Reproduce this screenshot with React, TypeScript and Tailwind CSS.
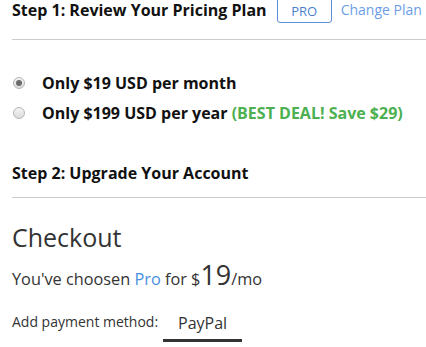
import React, { useState } from 'react';

function Radio({ checked, onClick }: { checked: boolean; onClick: () => void }) {
  return (
    <span
      onClick={onClick}
      className="ml-px w-[12px] h-[12px] rounded-full border border-[#b5b5b5] bg-gradient-to-b from-[#f4f4f4] to-[#dcdcdc] flex items-center justify-center shrink-0"
    >
      {checked && <span className="w-[6px] h-[6px] rounded-full bg-[#6b6b6b]" />}
    </span>
  );
}

export default function App() {
  const [plan, setPlan] = useState<'month' | 'year'>('month');

  return (
    <div className="w-[426px] h-[347px] overflow-hidden bg-white pl-3 text-[#111]" style={{ fontFamily: '"Open Sans", sans-serif' }}>
      <div className="flex items-start h-[39px]">
        <h3 className="text-[16px] font-bold leading-[18px] mt-px">Step 1: Review Your Pricing Plan</h3>
        <span className="-mt-[3px] ml-[10px] w-[55px] h-[26px] border border-[#5b8fd6] rounded-[3px] flex items-center justify-center text-[13px] text-[#4a7fd0] pt-[3px]">PRO</span>
        <a className="ml-[9px] mt-[1px] text-[14px] leading-[18px] text-[#6d9de6]">Change Plan</a>
      </div>
      <div className="h-px bg-[#cccccc]" />
      <div className="pt-[32px] flex flex-col gap-[8px]">
        <label className="flex items-center h-[22px]" onClick={() => setPlan('month')}>
          <Radio checked={plan === 'month'} onClick={() => setPlan('month')} />
          <span className="ml-[17px] text-[16px] font-bold">Only $19 USD per month</span>
        </label>
        <label className="flex items-center h-[22px]" onClick={() => setPlan('year')}>
          <Radio checked={plan === 'year'} onClick={() => setPlan('year')} />
          <span className="ml-[17px] text-[16px] font-bold">
            Only $199 USD per year <span className="text-[#4caf50]">(BEST DEAL! Save $29)</span>
          </span>
        </label>
      </div>
      <h3 className="mt-[38px] text-[16px] font-bold leading-[22px]">Step 2: Upgrade Your Account</h3>
      <div className="mt-[13px] h-px bg-[#cccccc]" />
      <h2 className="mt-[23px] text-[25px] leading-[32px] text-[#333]">Checkout</h2>
      <p className="mt-[6px] text-[16.3px] text-[#333] leading-[32px] h-[32px]">
        You've choosen <span className="text-[#4a8fe0]">Pro</span> for $<span className="text-[27px] leading-[32px]">19</span>/mo
      </p>
      <div className="mt-[21px] flex items-end">
        <span className="text-[14px] text-[#333] leading-[20px] pb-[10px]">Add payment method:</span>
        <div className="ml-[5px] w-[79px] border-b-[3px] border-[#333] text-center text-[16px] text-[#333] leading-[22px] pb-[5px]">PayPal</div>
      </div>
    </div>
  );
}
